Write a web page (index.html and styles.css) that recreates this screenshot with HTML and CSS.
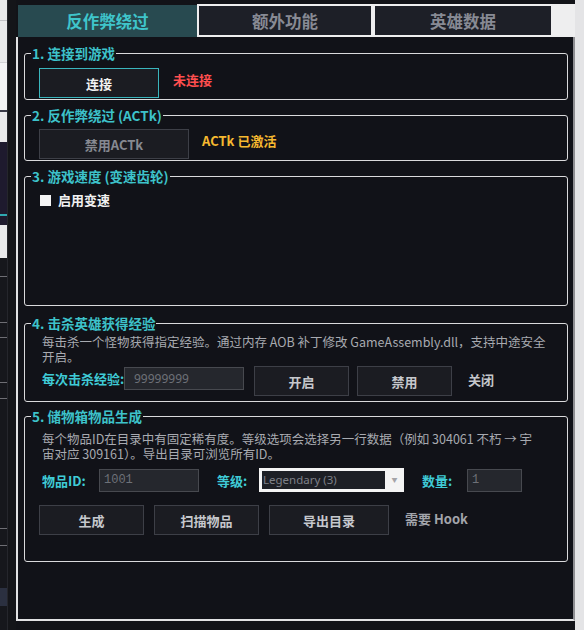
FILE: index.html
```html
<!DOCTYPE html>
<html lang="zh-CN">
<head>
    <meta charset="UTF-8">
    <meta name="viewport" content="width=device-width, initial-scale=1.0">
    <title>反作弊绕过</title>
    <link rel="stylesheet" href="styles.css">
</head>
<body>
    <div class="desk-strip">
        <div class="ds ds-light" style="height: 20px"></div>
        <div class="ds ds-line"></div>
        <div class="ds ds-light" style="height: 41px"></div>
        <div class="ds ds-faint"></div>
        <div class="ds ds-white" style="height: 47px"></div>
        <div class="ds ds-dark-line"></div>
        <div class="ds ds-light" style="height: 30px"></div>
        <div class="ds ds-purple" style="height: 72px"></div>
        <div class="ds ds-teal"></div>
        <div class="ds ds-purple" style="height: 9px"></div>
        <div class="ds ds-light" style="height: 33px"></div>
        <div class="ds ds-dark" style="height: 18px"></div>
        <div class="ds ds-gray-line"></div>
        <div class="ds ds-dark" style="height: 45px"></div>
        <div class="ds ds-gray-line"></div>
        <div class="ds ds-dark" style="height: 14px"></div>
        <div class="ds ds-gray-line"></div>
        <div class="ds ds-dark" style="height: 44px"></div>
        <div class="ds ds-gray-line"></div>
        <div class="ds ds-dark" style="height: 15px"></div>
        <div class="ds ds-gray-line"></div>
        <div class="ds ds-dark" style="height: 129px"></div>
        <div class="ds ds-gray-line"></div>
        <div class="ds ds-dark" style="height: 16px"></div>
        <div class="ds ds-gray-line"></div>
        <div class="ds ds-dark" style="height: 42px"></div>
        <div class="ds ds-block" style="height: 18px"></div>
        <div class="ds ds-dark" style="height: 24px"></div>
    </div>
    <div class="desk-gap"></div>

    <div class="window">
        <div class="tabs">
            <div class="tab tab-active">反作弊绕过</div>
            <div class="tab-rest">
                <div class="tab tab-extra">额外功能</div>
                <div class="tab tab-hero">英雄数据</div>
            </div>
        </div>

        <div class="page">
            <div class="group g-connect">
                <div class="group-title">1. 连接到游戏</div>
                <div class="row row-connect">
                    <button class="btn btn-accent btn-connect">连接</button>
                    <span class="status status-red">未连接</span>
                </div>
            </div>

            <div class="group g-actk">
                <div class="group-title">2. 反作弊绕过 (ACTk)</div>
                <div class="row row-actk">
                    <button class="btn btn-muted btn-actk">禁用ACTk</button>
                    <span class="status status-amber">ACTk 已激活</span>
                </div>
            </div>

            <div class="group g-speed">
                <div class="group-title">3. 游戏速度 (变速齿轮)</div>
                <div class="row row-check">
                    <span class="checkbox"></span>
                    <span class="check-label">启用变速</span>
                </div>
            </div>

            <div class="group g-exp">
                <div class="group-title">4. 击杀英雄获得经验</div>
                <p class="desc desc-exp">每击杀一个怪物获得指定经验。通过内存 AOB 补丁修改 GameAssembly.dll，支持中途安全<br>开启。</p>
                <div class="row row-exp">
                    <span class="field-label label-exp">每次击杀经验:</span>
                    <input class="field input-exp" type="text" value="99999999">
                    <button class="btn btn-plain btn-on">开启</button>
                    <button class="btn btn-plain btn-off">禁用</button>
                    <span class="status status-gray">关闭</span>
                </div>
            </div>

            <div class="group g-items">
                <div class="group-title">5. 储物箱物品生成</div>
                <p class="desc desc-items">每个物品ID在目录中有固定稀有度。等级选项会选择另一行数据（例如 304061 不朽 → 宇<br>宙对应 309161）。导出目录可浏览所有ID。</p>
                <div class="row row-fields">
                    <span class="field-label label-id">物品ID:</span>
                    <input class="field input-id" type="text" value="1001">
                    <span class="field-label label-grade">等级:</span>
                    <div class="combo">
                        <span class="combo-value">Legendary (3)</span>
                        <span class="combo-arrow">▼</span>
                    </div>
                    <span class="field-label label-count">数量:</span>
                    <input class="field input-count" type="text" value="1">
                </div>
                <div class="row row-actions">
                    <button class="btn btn-plain btn-make">生成</button>
                    <button class="btn btn-plain btn-scan">扫描物品</button>
                    <button class="btn btn-plain btn-export">导出目录</button>
                    <span class="status status-hook">需要 Hook</span>
                </div>
            </div>
        </div>
    </div>

    <div class="desk-right"></div>
</body>
</html>
```

FILE: styles.css
```css
body {
    display: flex;
    height: 630px;
    margin: 0;
    overflow: hidden;
    background: #121318;
    font-family: "Noto Sans CJK SC", "Noto Sans", sans-serif;
}

/* bits of the desktop around the window */
.desk-strip {
    width: 7px;
    display: flex;
    flex-direction: column;
    border-right: 1px solid #25262c;
}

.ds { flex-shrink: 0; }
.ds-light { background: #e9e9eb; }
.ds-white { background: #f3f3f5; }
.ds-line { height: 1px; background: #c2c2c6; }
.ds-faint { height: 1px; background: #d2d2d6; }
.ds-dark-line { height: 2px; background: #3a3a48; }
.ds-purple { background: #1e1a2e; }
.ds-teal { height: 2px; background: #2fa8b0; }
.ds-dark { background: #16171c; }
.ds-gray-line { height: 1px; background: #6e6e74; }
.ds-block { background: #2b3040; }

.desk-gap {
    width: 8px;
    background: #141519;
}

.desk-right {
    width: 9px;
    background: #e4e4e6;
}

.window {
    width: 559px;
    display: flex;
    flex-direction: column;
}

/* tab header */
.tabs {
    display: flex;
    height: 33px;
    margin-top: 4px;
}

.tab {
    display: flex;
    align-items: center;
    justify-content: center;
    font-size: 16.5px;
    font-weight: bold;
    color: #878a94;
    background: #1d1f27;
}

.tab-active {
    width: 179px;
    height: 32px;
    margin: 1px 0 0 2px;
    background: #284a50;
    color: #3fc5cb;
}

.tab-rest {
    flex: 1;
    display: flex;
    gap: 4px;
    padding: 2px 0 2px 2px;
    background: #eeeeef;
}

.tab-extra { width: 172px; }
.tab-hero { width: 176px; }

/* tab page */
.page {
    height: 584px;
    box-sizing: border-box;
    padding: 16px 5px 0 6px;
    background: #111218;
    border-left: 2px solid #e2e2e4;
    border-right: 2px solid #8e8e92;
    border-bottom: 2px solid #e2e2e4;
    display: flex;
    flex-direction: column;
    gap: 15px;
}

.group {
    box-sizing: border-box;
    border: 1px solid #dadadc;
    border-radius: 3px;
    padding-left: 14px;
    flex-shrink: 0;
}

.g-connect { height: 47px; }
.g-actk { height: 46px; }
.g-speed { height: 130px; }
.g-exp { height: 79px; margin-top: 2px; }
.g-items { height: 146px; margin-top: -1px; }

.group-title {
    display: table;
    margin: -9px 0 0 -8px;
    padding: 0 1px;
    background: #111218;
    line-height: 16px;
    font-size: 13.5px;
    font-weight: bold;
    color: #3dc2ca;
}

.row {
    display: flex;
    align-items: center;
}

.row-connect { margin-top: 7px; gap: 14px; }
.row-actk { margin-top: 6px; gap: 13px; }
.row-check { margin-top: 7px; gap: 7px; line-height: 18px; }
.row-exp { margin-top: 2px; align-items: flex-start; }
.row-fields { margin-top: 7px; }
.row-actions { margin-top: 13px; gap: 10px; }

.btn {
    height: 30px;
    box-sizing: border-box;
    padding: 0;
    font-family: inherit;
    font-size: 13px;
    font-weight: bold;
    background: #1b1c22;
    border: 1px solid #3d3f47;
    color: #c6c8cd;
}

.btn-accent {
    border-color: #3ab5bd;
    color: #f2f2f2;
}

.btn-muted { color: #868991; }

.btn-connect { width: 120px; }
.btn-actk { width: 150px; }
.btn-on { width: 95px; margin-left: 10px; }
.btn-off { width: 95px; margin-left: 8px; }
.btn-make, .btn-scan { width: 105px; }
.btn-export { width: 120px; }

.status {
    align-self: flex-start;
    font-size: 13px;
    font-weight: bold;
    line-height: 24px;
}

.status-red { color: #ff4f4f; }
.status-amber { color: #f6b930; }
.status-gray { color: #c4c6cb; margin-left: 16px; line-height: 27px; }
.status-hook { color: #a2a4aa; margin-left: 6px; line-height: 28px; }

.checkbox {
    width: 11px;
    height: 11px;
    margin-left: 1px;
    background: #f4f4f4;
}

.check-label {
    font-size: 13px;
    font-weight: bold;
    color: #f0f0f0;
}

.desc {
    margin: 0;
    padding-left: 3px;
    font-size: 12.5px;
    line-height: 15px;
    white-space: nowrap;
    color: #a8aab0;
}

.desc-exp { margin-top: 3px; }
.desc-items { margin-top: 7px; }

.field-label {
    flex-shrink: 0;
    font-size: 13px;
    font-weight: bold;
    color: #3fcbd6;
    line-height: 23px;
    white-space: nowrap;
}

.label-exp {
    position: relative;
    z-index: 1;
    width: 82px;
    margin: 1px 0 0 3px;
}

.label-id { width: 57px; margin-left: 3px; }
.label-grade { width: 42px; margin-left: 18px; }
.label-count { width: 45px; margin-left: 18px; }

.field {
    height: 23px;
    box-sizing: border-box;
    padding: 0 0 0 4px;
    font-family: "Noto Sans", sans-serif;
    font-size: 12px;
    color: #6e7178;
    background: #25272d;
    border: 1px solid #47494f;
    outline: none;
}

.input-exp { width: 120px; margin-top: 1px; padding-left: 9px; }
.input-id { width: 100px; font-family: "Liberation Mono", monospace; }
.input-count { width: 55px; font-family: "Liberation Mono", monospace; }

.combo {
    width: 145px;
    height: 24px;
    box-sizing: border-box;
    padding: 3px 0 3px 3px;
    display: flex;
    background: #f4f4f4;
}

.combo-value {
    flex: 1;
    padding-left: 1px;
    background: #1d1f25;
    color: #7d8088;
    font-family: "Noto Sans", sans-serif;
    font-size: 11.5px;
    line-height: 18px;
}

.combo-arrow {
    width: 19px;
    text-align: center;
    font-size: 6px;
    line-height: 18px;
    color: #a4a4a8;
}
```
